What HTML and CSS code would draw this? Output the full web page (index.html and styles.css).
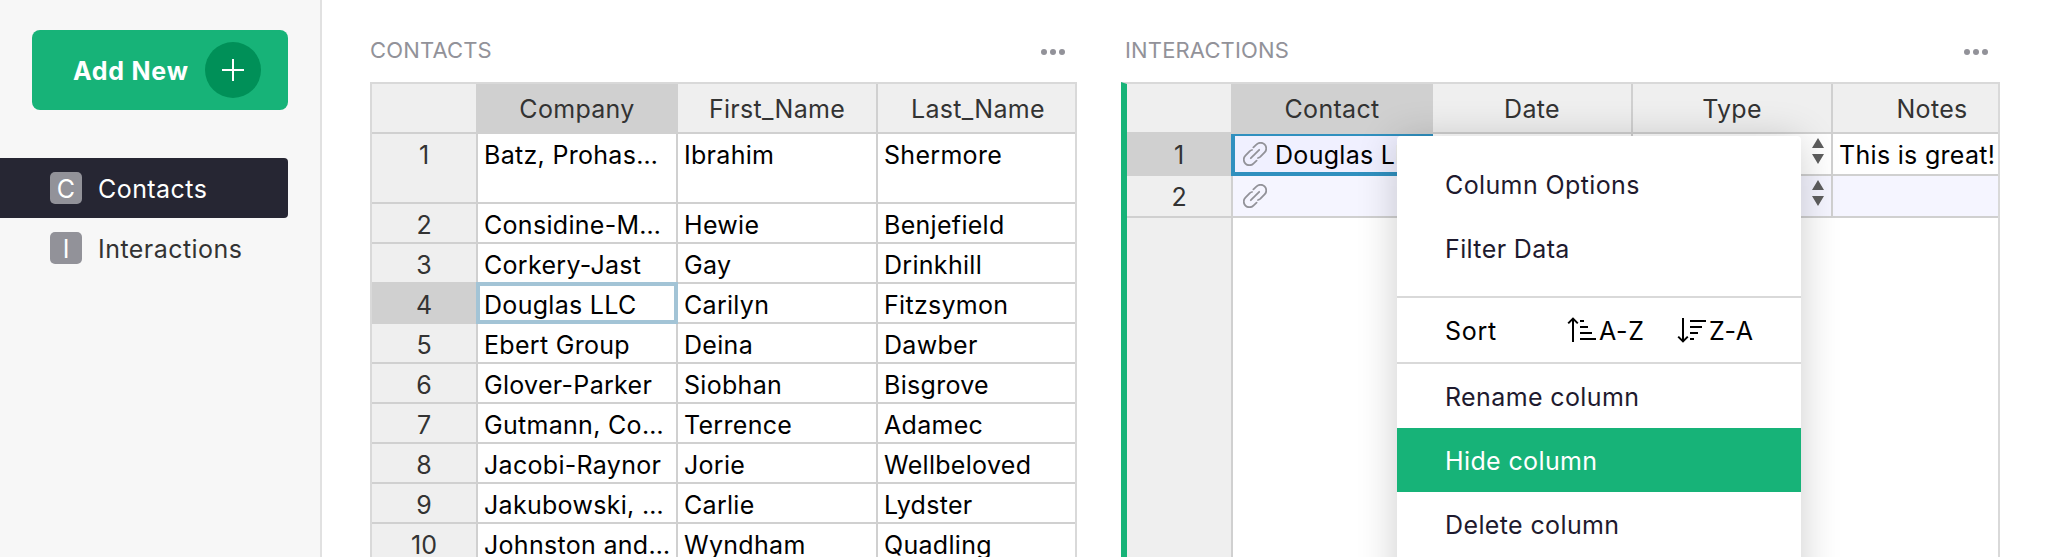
FILE: index.html
```html
<!DOCTYPE html>
<html lang="en">
<head>
<meta charset="utf-8">
<title>Contacts</title>
<link rel="stylesheet" href="styles.css">
</head>
<body>
<svg width="0" height="0" class="defs">
  <symbol id="link" viewBox="0 0 24 24"><g fill="none" stroke="currentColor" stroke-width="1.8" stroke-linecap="round" stroke-linejoin="round"><path d="M10.4 5.4 13.6 2.4A5.6 5.6 0 0 1 21.6 10.4L17.2 14.8Q16.2 15.7 15 16"/><path d="M13.6 18.6 10.4 21.6A5.6 5.6 0 0 1 2.4 13.6L6.8 9.2Q7.8 8.3 9 8"/><path d="M7.8 16.2 16.2 7.8"/></g></symbol>
  <symbol id="dots" viewBox="0 0 24 6"><circle cx="3" cy="3" r="3"/><circle cx="12" cy="3" r="3"/><circle cx="21" cy="3" r="3"/></symbol>
  <symbol id="updown" viewBox="0 0 12 26"><path d="M6 0 12 10H0ZM0 16H12L6 26Z"/></symbol>
</svg>
<div class="app">
  <nav class="sidebar">
    <button class="add"><span class="add-label">Add New</span><span class="add-plus"><svg width="22" height="22" viewBox="0 0 22 22"><path d="M11 0V22M0 11H22" stroke="#fff" stroke-width="2"/></svg></span></button>
    <div class="page active"><span class="badge">C</span><span class="page-name">Contacts</span></div>
    <div class="page"><span class="badge">I</span><span class="page-name">Interactions</span></div>
  </nav>
  <main class="main">
    <section class="section contacts">
      <header class="title"><span>CONTACTS</span><svg class="dots" width="24" height="6"><use href="#dots"/></svg></header>
      <div class="grid">
        <div class="row head"><div class="num"></div><div class="cell sel">Company</div><div class="cell">First_Name</div><div class="cell">Last_Name</div></div>
        <div class="row tall"><div class="num">1</div><div class="cell">Batz, Prohas…</div><div class="cell">Ibrahim</div><div class="cell">Shermore</div></div>
        <div class="row"><div class="num">2</div><div class="cell">Considine-M…</div><div class="cell">Hewie</div><div class="cell">Benjefield</div></div>
        <div class="row"><div class="num">3</div><div class="cell">Corkery-Jast</div><div class="cell">Gay</div><div class="cell">Drinkhill</div></div>
        <div class="row"><div class="num sel">4</div><div class="cell cursor">Douglas LLC</div><div class="cell">Carilyn</div><div class="cell">Fitzsymon</div></div>
        <div class="row"><div class="num">5</div><div class="cell">Ebert Group</div><div class="cell">Deina</div><div class="cell">Dawber</div></div>
        <div class="row"><div class="num">6</div><div class="cell">Glover-Parker</div><div class="cell">Siobhan</div><div class="cell">Bisgrove</div></div>
        <div class="row"><div class="num">7</div><div class="cell">Gutmann, Co…</div><div class="cell">Terrence</div><div class="cell">Adamec</div></div>
        <div class="row"><div class="num">8</div><div class="cell">Jacobi-Raynor</div><div class="cell">Jorie</div><div class="cell">Wellbeloved</div></div>
        <div class="row"><div class="num">9</div><div class="cell">Jakubowski, …</div><div class="cell">Carlie</div><div class="cell">Lydster</div></div>
        <div class="row"><div class="num">10</div><div class="cell">Johnston and…</div><div class="cell">Wyndham</div><div class="cell">Quadling</div></div>
      </div>
    </section>
    <section class="section interactions">
      <header class="title"><span>INTERACTIONS</span><svg class="dots" width="24" height="6"><use href="#dots"/></svg></header>
      <div class="grid">
        <div class="row head"><div class="num"></div><div class="cell sel">Contact</div><div class="cell">Date</div><div class="cell">Type</div><div class="cell">Notes</div></div>
        <div class="row"><div class="num sel">1</div><div class="cell ref cursor"><svg class="link" width="24" height="24"><use href="#link"/></svg>Douglas LLC</div><div class="cell"></div><div class="cell choice"><svg width="12" height="26"><use href="#updown"/></svg></div><div class="cell">This is great!</div></div>
        <div class="row new"><div class="num">2</div><div class="cell ref"><svg class="link" width="24" height="24"><use href="#link"/></svg></div><div class="cell"></div><div class="cell choice"><svg width="12" height="26"><use href="#updown"/></svg></div><div class="cell"></div></div>
        <div class="rest"></div>
      </div>
    </section>
  </main>
  <div class="menu">
    <div class="item">Column Options</div>
    <div class="item">Filter Data</div>
    <div class="sort"><span class="sort-label">Sort</span>
      <span class="sort-btn"><svg width="29" height="26" viewBox="0 0 29 26" fill="none" stroke="#000" stroke-width="2"><path d="M6 25V2M1.2 6.4 6 1.6 10.8 6.4"/><path d="M13 4H17M13 10H21M13 16H25M13 22H29"/></svg><span class="sort-text">A-Z</span></span>
      <span class="sort-btn"><svg width="29" height="26" viewBox="0 0 29 26" fill="none" stroke="#000" stroke-width="2"><path d="M6 1V24M1.2 19.6 6 24.4 10.8 19.6"/><path d="M13 4H29M13 10H25M13 16H21M13 22H17"/></svg><span class="sort-text">Z-A</span></span>
    </div>
    <div class="item">Rename column</div>
    <div class="item hover">Hide column</div>
    <div class="item">Delete column</div>
  </div>
</div>
</body>
</html>
```
FILE: styles.css
```css
* { box-sizing: border-box; }
body { margin: 0; background: #fff; font-family: Inter, "Liberation Sans", sans-serif; font-size: 25px; color: #000; letter-spacing: .3px; }
svg { display: block; flex: none; }
.defs { position: absolute; }
.app { position: relative; display: flex; width: 2048px; height: 557px; overflow: hidden; }

.sidebar { width: 322px; flex: none; background: #f7f7f7; border-right: 2px solid #e1e1e1; padding-top: 30px; }
.add { display: flex; align-items: center; width: 256px; height: 80px; margin: 0 0 48px 32px; padding: 0 27px 0 41px; border: 0; border-radius: 8px; background: #17b378; color: #fff; font: 700 25px/80px Inter, sans-serif; letter-spacing: .75px; justify-content: space-between; }
.add-label { padding-top: 1px; white-space: nowrap; }
.add-plus { display: flex; align-items: center; justify-content: center; width: 56px; height: 56px; border-radius: 50%; background: #009058; }
.page { display: flex; align-items: center; width: 288px; height: 60px; padding-left: 50px; gap: 16px; color: #333; border-radius: 0 4px 4px 0; letter-spacing: .45px; }
.page.active { background: #262633; color: #fff; }
.badge { width: 32px; height: 32px; border-radius: 5px; background: #929299; color: #fff; text-align: center; line-height: 34px; letter-spacing: 0; }
.page-name { line-height: 60px; padding-top: 2px; }

.main { display: flex; flex: 1; min-width: 0; padding-left: 48px; gap: 44px; }
.section { display: flex; flex-direction: column; height: 557px; flex: none; }
.contacts { width: 707px; }
.interactions { width: 879px; }
.title { display: flex; align-items: center; justify-content: space-between; height: 82px; padding: 18px 12px 0 0; font-size: 22px; color: #929299; letter-spacing: .15px; }
.interactions .title { padding-left: 4px; padding-right: 12px; }
.dots { fill: #929299; margin-top: 4px; }
.grid { flex: 1; min-height: 0; overflow: hidden; border: solid #d9d9d9; border-width: 2px 2px 0 2px; display: flex; flex-direction: column; }
.interactions .grid { border-left: 6px solid #17b378; }
.row { display: flex; flex: none; height: 40px; }
.row.head { height: 50px; color: #333; text-align: center; }
.row.tall { height: 70px; }
.num { flex: none; width: 106px; background: #efefef; border: solid #d0d0d0; border-width: 0 2px 2px 0; text-align: center; line-height: 40px; padding-top: 1px; color: #333; letter-spacing: 0; }
.cell { position: relative; flex: none; width: 200px; border: solid #d0d0d0; border-width: 0 2px 2px 0; padding: 1px 0 0 6px; line-height: 40px; white-space: nowrap; overflow: hidden; }
.head .cell { background: #efefef; line-height: 48px; padding: 1px 0 0; }
.head .cell.sel, .num.sel { background: #d0d0d0; }
.cursor { overflow: visible; }
.cursor::after { content: ""; position: absolute; left: -2px; right: -2px; top: -2px; bottom: -2px; border: 4px solid #a3c4d6; }
.contacts .cell:last-child { border-right: 0; }
.interactions .row:not(.head) { height: 42px; }
.interactions .cursor { background: #f0f0ff; }
.interactions .cursor::after { top: 0; border-color: #3090bf; border-top-width: 2px; }
.new .cell { background: #f5f5ff; }
.ref { display: flex; gap: 8px; padding-left: 10px; }
.link { color: #929299; margin-top: 7px; }
.choice { display: flex; justify-content: flex-end; padding: 4px 7px 0 0; fill: #5e5e5e; }
.rest { flex: 1; width: 106px; background: #efefef; border-right: 2px solid #d0d0d0; }

.menu { position: absolute; left: 1397px; top: 136px; width: 404px; height: 480px; padding-top: 16px; background: #fff; border-radius: 4px; box-shadow: 0 4px 40px rgba(0,0,0,.2); color: #1e1a2e; letter-spacing: .38px; }
.item { height: 64px; line-height: 64px; padding: 1px 0 0 48px; }
.item.hover { background: #17b378; color: #fff; }
.sort { display: flex; align-items: center; height: 68px; margin-top: 16px; padding-left: 48px; border: solid #d9d9d9; border-width: 2px 0; color: #000; letter-spacing: .7px; }
.sort-label { width: 122px; padding-top: 2px; }
.sort-btn { display: flex; align-items: center; gap: 3px; width: 110px; }
.sort-text { padding-top: 2px; }
```
